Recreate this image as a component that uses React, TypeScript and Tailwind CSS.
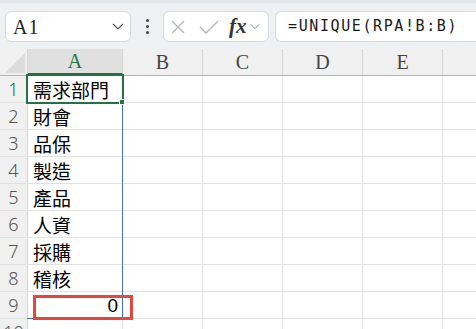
import React from "react";

const cols = ["B", "C", "D", "E", ""];
const values = ["需求部門", "財會", "品保", "製造", "產品", "人資", "採購", "稽核", ""];

const Chevron = ({ className }: { className?: string }) => (
    <svg width="12" height="7" viewBox="0 0 12 7" className={className}>
        <path d="M1 1l5 5 5-5" fill="none" stroke="currentColor" strokeWidth="1.2" />
    </svg>
);

const App = () => {
    return (
        <div className="w-[476px] h-[329px] overflow-hidden bg-white relative font-[family-name:Noto_Sans,Noto_Sans_CJK_TC,sans-serif]">
            {/* toolbar */}
            <div className="h-[49px] bg-[#eef1f4] border-t-[3px] border-[#e3e7ec] flex items-center gap-[6px] pl-[5px] pt-[1px]">
                <div className="w-[126px] h-[31px] bg-white border border-[#d6d9dd] rounded-[6px] flex items-center justify-between pl-[7px] pr-[6px]">
                    <span className="text-[20px] text-[#222] font-[family-name:Liberation_Serif,serif] tracking-[1px]">A1</span>
                    <Chevron className="text-[#555]" />
                </div>
                <div className="w-[20px] flex flex-col items-center gap-[3px]">
                    <span className="w-[3px] h-[3px] bg-[#444] rounded-full"></span>
                    <span className="w-[3px] h-[3px] bg-[#444] rounded-full"></span>
                    <span className="w-[3px] h-[3px] bg-[#444] rounded-full"></span>
                </div>
                <div className="w-[106px] h-[31px] bg-white border border-[#d6d9dd] rounded-[6px] flex items-center pl-[6px]">
                    <svg width="16" height="16" viewBox="0 0 16 16" className="text-[#b4b4b4]">
                        <path d="M2 2l12 12M14 2L2 14" stroke="currentColor" strokeWidth="1.3" />
                    </svg>
                    <svg width="20" height="16" viewBox="0 0 20 16" className="ml-[13px] text-[#b4b4b4]">
                        <path d="M1 8l6 6L19 2" fill="none" stroke="currentColor" strokeWidth="1.3" />
                    </svg>
                    <span className="ml-[10px] text-[21px] italic font-semibold text-[#333] font-[family-name:Liberation_Serif,serif] leading-none">fx</span>
                    <Chevron className="ml-[3px] text-[#888] w-[10px]" />
                </div>
                <div className="flex-1 h-[31px] bg-white border border-[#d6d9dd] rounded-l-[6px] border-r-0 flex items-center pl-[12px]">
                    <span className="text-[15px] tracking-[1.6px] text-[#1a1a1a] font-[family-name:DejaVu_Sans_Mono,monospace]">=UNIQUE(RPA!B:B)</span>
                </div>
            </div>

            {/* grid */}
            <div className="relative">
                <div className="flex h-[27px] bg-[#f0f0f0] border-b border-[#b4b4b4]">
                    <div className="w-[28px] border-r border-[#d4d4d4] relative overflow-hidden">
                        <div className="absolute right-[2px] bottom-[2px] w-0 h-0 border-l-[20px] border-l-transparent border-b-[20px] border-b-[#dcdcdc]"></div>
                    </div>
                    <div className="w-[95px] bg-[#e0e0e0] border-r border-[#d4d4d4] border-b-2 border-b-[#217346] flex items-center justify-center text-[#217346] text-[20px] font-[family-name:Liberation_Serif,serif]">A</div>
                    {cols.map((c, i) => (
                        <div key={i} className={`${c ? "w-[80px] border-r border-[#d4d4d4]" : "flex-1"} flex items-center justify-center text-[#444] text-[20px] font-[family-name:Liberation_Serif,serif]`}>{c}</div>
                    ))}
                </div>
                {[...values, "", ""].map((v, r) => (
                    <div key={r} className="flex h-[27px] border-b border-[#e1e1e1]">
                        <div className={`w-[28px] bg-[#f0f0f0] border-r border-[#d4d4d4] flex items-center justify-center text-[18px] font-light ${r === 0 ? "text-[#217346]" : "text-[#555]"}`}>{r + 1}</div>
                        <div className="w-[95px] border-r border-[#e1e1e1] flex items-center pl-[5px] text-[19px] text-black leading-none whitespace-nowrap font-[family-name:Noto_Sans_CJK_TC,sans-serif]">
                            {r === 8 ? <span className="ml-auto pr-[4px] text-[19px] font-[family-name:Liberation_Sans,sans-serif] font-light">0</span> : v}
                        </div>
                        {cols.map((c, i) => (
                            <div key={i} className={c ? "w-[80px] border-r border-[#e1e1e1]" : "flex-1"}></div>
                        ))}
                    </div>
                ))}

                {/* spill range border */}
                <div className="absolute left-[27px] top-[27px] w-[96px] h-[243px] border-r border-b border-[#3b6fd1]"></div>
                {/* active cell */}
                <div className="absolute left-[26px] top-[25px] w-[98px] h-[30px] border-2 border-[#217346]"></div>
                <div className="absolute left-[119px] top-[50px] w-[6px] h-[6px] bg-[#217346] border border-white"></div>
                {/* highlight */}
                <div className="absolute left-[33px] top-[246px] w-[100px] h-[25px] border-[3px] border-[#e5473f]"></div>
            </div>
        </div>
    );
};

export default App;
